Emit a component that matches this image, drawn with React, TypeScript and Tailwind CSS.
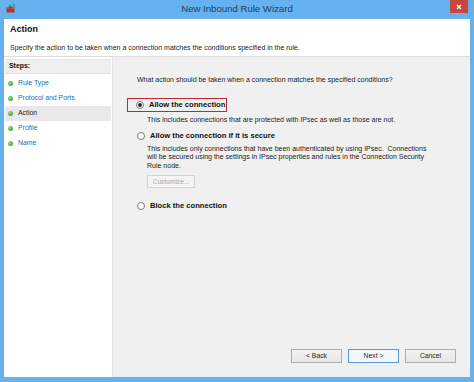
import type { ReactNode } from "react";

const FONT = { fontFamily: '"Liberation Sans", Arial, sans-serif' };

type Step = { label: string; current?: boolean };

const steps: Step[] = [
  { label: "Rule Type" },
  { label: "Protocol and Ports" },
  { label: "Action", current: true },
  { label: "Profile" },
  { label: "Name" },
];

function Radio({ checked = false }: { checked?: boolean }) {
  return (
    <span className="flex h-[8px] w-[8px] shrink-0 items-center justify-center rounded-full border border-[#7a7a7a] bg-white">
      {checked ? <span className="h-[4px] w-[4px] rounded-full bg-[#2b2b2b]" /> : null}
    </span>
  );
}

function Button({ children, primary = false }: { children: ReactNode; primary?: boolean }) {
  return (
    <div
      className={
        "flex h-[14px] w-[51px] items-center justify-center border text-[6.8px] text-[#1e1e1e] " +
        (primary
          ? "border-[#5b9bd5] bg-[#f4f8fc]"
          : "border-[#adadad] bg-gradient-to-b from-[#f3f3f3] to-[#e6e6e6]")
      }
    >
      {children}
    </div>
  );
}

function WizardIcon() {
  return (
    <svg width="10" height="10" viewBox="0 0 10 10">
      <rect x="0.5" y="4" width="8" height="5.5" rx="0.5" fill="#b2352c" />
      <rect x="0.5" y="4" width="8" height="1.6" fill="#d9574a" />
      <rect x="3.3" y="2.8" width="2.4" height="1.5" fill="none" stroke="#7a241d" strokeWidth="0.7" />
      <circle cx="6.8" cy="2.6" r="2.2" fill="#2f9fb8" />
      <circle cx="6.3" cy="2.1" r="0.9" fill="#7fd36b" />
    </svg>
  );
}

export default function App() {
  return (
    <div className="flex h-[382px] w-[474px] flex-col bg-[#66b2ef]" style={FONT}>
      {/* title bar */}
      <div className="relative flex h-[19px] shrink-0 items-center justify-center">
        <div className="absolute left-[6px] top-[3px]">
          <WizardIcon />
        </div>
        <span className="text-[9.6px] text-[#1f3b5e]">New Inbound Rule Wizard</span>
        <div className="absolute right-[6px] top-0 flex h-[13px] w-[18px] items-center justify-center bg-[#c9463d]">
          <svg width="6" height="6" viewBox="0 0 6 6">
            <path d="M1 1 L5 5 M5 1 L1 5" stroke="#ffffff" strokeWidth="1.3" />
          </svg>
        </div>
      </div>

      <div className="mx-[4px] mb-[5px] flex flex-1 flex-col bg-white">
        {/* header */}
        <div className="h-[38px] shrink-0 border-b border-[#dcdcdc] pl-[6px]">
          <div className="mt-[5px] text-[9px] font-bold leading-[10px] text-[#111]">Action</div>
          <div className="mt-[10px] text-[7px] leading-[8px] text-[#222]">
            Specify the action to be taken when a connection matches the conditions specified in the rule.
          </div>
        </div>

        {/* body */}
        <div className="flex flex-1">
          <div className="w-[109px] shrink-0 border-r border-[#e6e6e6] bg-white px-[1px] pt-[2px]">
            <div className="flex h-[15px] items-center border-y border-[#e3e3e3] bg-[#efefef] pl-[4px] text-[6.9px] font-bold text-[#111]">
              Steps:
            </div>
            <div className="mt-[2px] flex flex-col">
              {steps.map((step) => (
                <div
                  key={step.label}
                  className={
                    "flex h-[15px] items-center gap-[5px] pl-[3px] text-[6.9px] " +
                    (step.current ? "bg-[#e8e8e8] text-[#1a1a1a]" : "text-[#2c69b8]")
                  }
                >
                  <span className="h-[5px] w-[5px] rounded-full bg-[radial-gradient(circle_at_35%_35%,#9be07a,#2e8b2e)]" />
                  {step.label}
                </div>
              ))}
            </div>
          </div>

          <div className="flex flex-1 flex-col border-r border-[#f7f7f7] bg-[#f0f0f0] pl-[24px] pr-[10px]">
            <div className="mt-[18px] text-[7px] leading-[9px] text-[#222]">
              What action should be taken when a connection matches the specified conditions?
            </div>

            <div className="-ml-[10px] mt-[14px] flex h-[14px] w-[100px] items-center gap-[5px] border-[1.5px] border-[#c3262c] pl-[8px]">
              <Radio checked />
              <span className="text-[7.6px] font-bold text-[#111]">Allow the connection</span>
            </div>
            <div className="ml-[10px] mt-[2.5px] text-[7px] leading-[9px] text-[#222]">
              This includes connections that are protected with IPsec as well as those are not.
            </div>

            <div className="mt-[7.5px] flex h-[10px] items-center gap-[5px]">
              <Radio />
              <span className="text-[7.6px] font-bold text-[#111]">Allow the connection if it is secure</span>
            </div>
            <div className="ml-[10px] mt-[3.75px] text-[7px] leading-[8.5px] text-[#222]">
              This includes only connections that have been authenticated by using IPsec.&nbsp; Connections
              <br />
              will be secured using the settings in IPsec properties and rules in the Connection Security
              <br />
              Rule node.
            </div>
            <div className="ml-[10px] mt-[4.75px] flex h-[13px] w-[48px] items-center justify-center border border-[#d2d2d2] bg-[#f4f4f4] text-[6.6px] text-[#a8a8a8]">
              Customize...
            </div>

            <div className="mt-[12.7px] flex h-[10px] items-center gap-[5px]">
              <Radio />
              <span className="text-[7.6px] font-bold text-[#111]">Block the connection</span>
            </div>

            <div className="mb-[14px] mt-auto flex justify-end gap-[6px] pr-[3px]">
              <Button>&lt; Back</Button>
              <Button primary>Next &gt;</Button>
              <Button>Cancel</Button>
            </div>
          </div>
        </div>
      </div>
    </div>
  );
}
